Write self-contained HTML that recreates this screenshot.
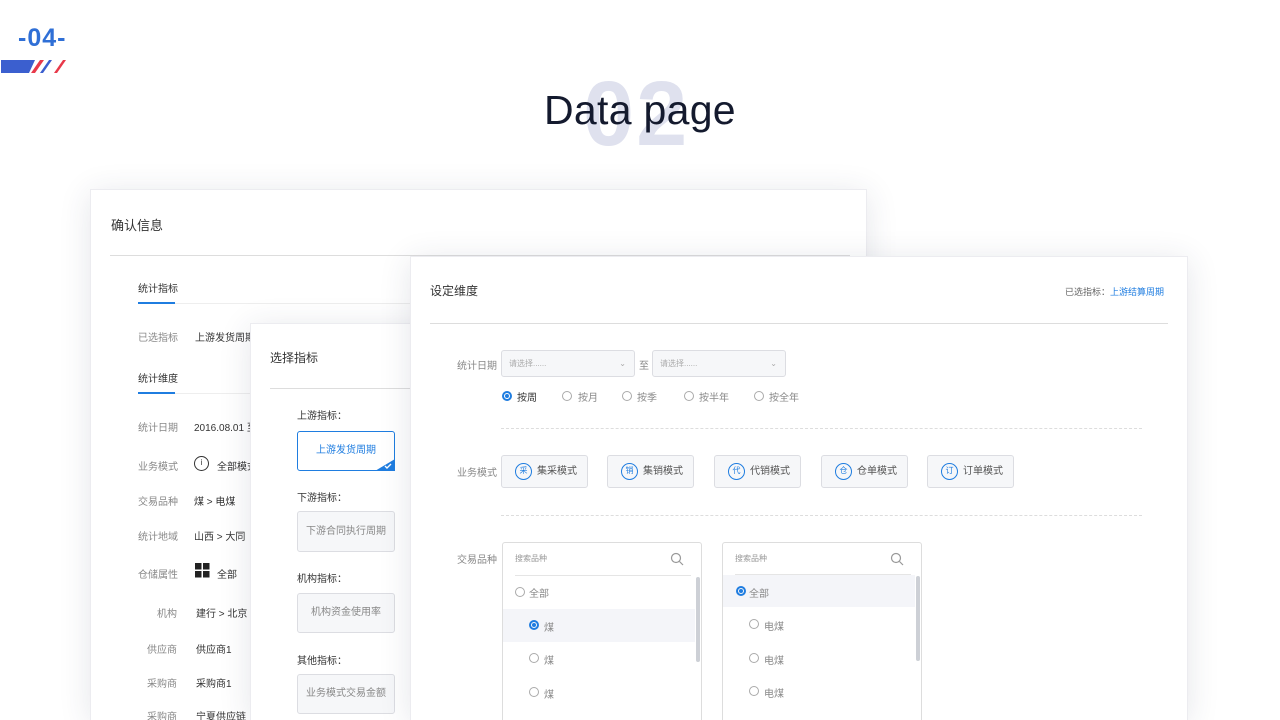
<!DOCTYPE html>
<html style="width:1280px;height:720px;overflow:hidden"><head><meta charset="utf-8"><style>
*{margin:0;padding:0;box-sizing:border-box}
body{width:1280px;height:720px;overflow:hidden;background:#fff;position:relative;font-family:"Liberation Sans","Noto Sans CJK SC",sans-serif;color:#333}
.a{position:absolute;white-space:nowrap}
.card{position:absolute;background:#fff;box-shadow:0 4px 30px rgba(40,50,80,.12);border:1px solid #ececf0;border-bottom:none;overflow:hidden}
.s12{font-size:10px}
.g{color:#888}
.box{position:absolute;border:1px solid #dcdde2;border-radius:3px;background:#f6f7f9;font-size:10px;color:#888;text-align:center;white-space:nowrap}
.rad{position:absolute;width:10px;height:10px;border:1px solid #aaa;border-radius:50%}
.rad.on{border:2px solid #1f7de0}
.rad.on::after{content:"";position:absolute;left:1px;top:1px;width:4px;height:4px;border-radius:50%;background:#1f7de0}
.mb{position:absolute;height:33px;border:1px solid #dcdde2;border-radius:3px;background:#f6f7f9;font-size:10px;color:#555;line-height:31px;padding-left:35px;white-space:nowrap}
.mb i{position:absolute;left:13px;top:7px;width:17px;height:17px;border:1.5px solid #1f7de0;border-radius:50%;font-style:normal;font-size:8px;color:#1f7de0;line-height:14px;text-align:center;padding:0}
</style></head><body>
<div class="a" style="left:18px;top:24px;font-size:25px;font-weight:bold;color:#2f6fd6;letter-spacing:1px">-04-</div>
<svg class="a" style="left:0;top:59px" width="70" height="16"><polygon points="1,1 35,1 29,14 1,14" fill="#3b5fcf" /><polygon points="40,1 44,1 35,14 31,14" fill="#e8394a"/><polygon points="49,1 52,1 43,14 40,14" fill="#3b5fcf"/><polygon points="63,1 66,1 57,14 54,14" fill="#e8394a"/></svg>
<div class="a" style="left:583px;top:62px;font-size:92px;font-weight:bold;color:#dfe1ee;letter-spacing:2px">02</div>
<div class="a" style="left:544px;top:87px;font-size:41px;color:#141a2e;letter-spacing:0.3px">Data page</div>

<div class="card" style="left:90px;top:189px;width:777px;height:531px">
<div class="a" style="left:20px;top:25px;font-size:13px">确认信息</div>
<div class="a" style="left:19px;top:65px;width:740px;height:1px;background:#ddd"></div>
<div class="a s12" style="left:47px;top:90px">统计指标</div>
<div class="a" style="left:47px;top:112px;width:37px;height:2px;background:#1f7de0"></div>
<div class="a" style="left:84px;top:113px;width:680px;height:1px;background:#eee"></div>
<div class="a s12 g" style="left:47px;top:139px">已选指标</div><div class="a s12" style="left:104px;top:139px">上游发货周期</div>
<div class="a s12" style="left:47px;top:180px">统计维度</div>
<div class="a" style="left:47px;top:202px;width:37px;height:2px;background:#1f7de0"></div>
<div class="a" style="left:84px;top:203px;width:680px;height:1px;background:#eee"></div>
<div class="a s12 g" style="left:47px;top:229px">统计日期</div><div class="a s12" style="left:103px;top:229px">2016.08.01 至</div>
<div class="a s12 g" style="left:47px;top:268px">业务模式</div><div class="a" style="left:103px;top:266px;width:15px;height:15px;border:1.5px solid #333;border-radius:50%;font-size:8px;text-align:center;line-height:12px">i</div><div class="a s12" style="left:126px;top:268px">全部模式</div>
<div class="a s12 g" style="left:47px;top:303px">交易品种</div><div class="a s12" style="left:103px;top:303px">煤 &gt; 电煤</div>
<div class="a s12 g" style="left:47px;top:338px">统计地域</div><div class="a s12" style="left:103px;top:338px">山西 &gt; 大同</div>
<svg class="a" style="left:104px;top:373px" width="15" height="15"><rect width="6.5" height="6.5" fill="#222"/><rect x="8" width="6.5" height="6.5" fill="#222"/><rect y="8" width="6.5" height="6.5" fill="#222"/><rect x="8" y="8" width="6.5" height="6.5" fill="#222"/></svg>
<div class="a s12 g" style="left:47px;top:376px">仓储属性</div><div class="a s12" style="left:126px;top:376px">全部</div>
<div class="a s12 g" style="left:66px;top:415px">机构</div><div class="a s12" style="left:105px;top:415px">建行 &gt; 北京</div>
<div class="a s12 g" style="left:56px;top:451px">供应商</div><div class="a s12" style="left:105px;top:451px">供应商1</div>
<div class="a s12 g" style="left:56px;top:485px">采购商</div><div class="a s12" style="left:105px;top:485px">采购商1</div>
<div class="a s12 g" style="left:56px;top:518px">采购商</div><div class="a s12" style="left:105px;top:518px">宁夏供应链</div>
</div>

<div class="card" style="left:250px;top:323px;width:180px;height:397px">
<div class="a" style="left:19px;top:25px;font-size:12px">选择指标</div>
<div class="a" style="left:19px;top:64px;width:160px;height:1px;background:#ddd"></div>
<div class="a s12" style="left:46px;top:83px">上游指标：</div>
<div class="box" style="left:46px;top:107px;width:98px;height:40px;line-height:38px;background:#fff;border-color:#1f7de0;color:#1f7de0">上游发货周期
<svg style="position:absolute;right:-1px;bottom:-1px" width="20" height="12"><polygon points="20,0 20,12 0,12" fill="#1f7de0"/><path d="M10,7 l2,2 l4,-4" stroke="#fff" stroke-width="1.4" fill="none"/></svg></div>
<div class="a s12" style="left:46px;top:165px">下游指标：</div>
<div class="box" style="left:46px;top:187px;width:98px;height:41px;line-height:39px">下游合同执行周期</div>
<div class="a s12" style="left:46px;top:246px">机构指标：</div>
<div class="box" style="left:46px;top:269px;width:98px;height:40px;line-height:38px">机构资金使用率</div>
<div class="a s12" style="left:46px;top:328px">其他指标：</div>
<div class="box" style="left:46px;top:350px;width:98px;height:40px;line-height:38px">业务模式交易金额</div>
</div>

<div class="card" style="left:410px;top:256px;width:778px;height:464px">
<div class="a" style="left:19px;top:25px;font-size:12px">设定维度</div>
<div class="a" style="left:654px;top:28px;font-size:9px;color:#666">已选指标：<span style="color:#1f7de0">上游结算周期</span></div>
<div class="a" style="left:19px;top:66px;width:738px;height:1px;background:#ddd"></div>
<div class="a s12 g" style="left:46px;top:100px">统计日期</div>
<div class="box" style="left:90px;top:93px;width:134px;height:27px;line-height:25px;text-align:left;padding-left:7px;font-size:8px;color:#aaa">请选择......<span style="position:absolute;right:8px">⌄</span></div>
<div class="a s12 g" style="left:228px;top:100px">至</div>
<div class="box" style="left:241px;top:93px;width:134px;height:27px;line-height:25px;text-align:left;padding-left:7px;font-size:8px;color:#aaa">请选择......<span style="position:absolute;right:8px">⌄</span></div>
<div class="rad on" style="left:91px;top:134px"></div><div class="a s12" style="left:106px;top:132px">按周</div>
<div class="rad" style="left:151px;top:134px"></div><div class="a s12 g" style="left:167px;top:132px">按月</div>
<div class="rad" style="left:211px;top:134px"></div><div class="a s12 g" style="left:226px;top:132px">按季</div>
<div class="rad" style="left:273px;top:134px"></div><div class="a s12 g" style="left:288px;top:132px">按半年</div>
<div class="rad" style="left:343px;top:134px"></div><div class="a s12 g" style="left:358px;top:132px">按全年</div>
<div class="a" style="left:90px;top:171px;width:641px;border-top:1px dashed #ddd"></div>
<div class="a s12 g" style="left:46px;top:207px">业务模式</div>
<div class="mb" style="left:90px;top:198px;width:87px">集采模式<i>采</i></div>
<div class="mb" style="left:196px;top:198px;width:87px">集销模式<i>销</i></div>
<div class="mb" style="left:303px;top:198px;width:87px">代销模式<i>代</i></div>
<div class="mb" style="left:410px;top:198px;width:87px">仓单模式<i>仓</i></div>
<div class="mb" style="left:516px;top:198px;width:87px">订单模式<i>订</i></div>
<div class="a" style="left:90px;top:258px;width:641px;border-top:1px dashed #ddd"></div>
<div class="a s12 g" style="left:46px;top:294px">交易品种</div>
<div class="a" style="left:91px;top:285px;width:200px;height:185px;border:1px solid #ddd;border-radius:3px;overflow:hidden">
<div class="a" style="left:12px;top:10px;font-size:8px;color:#999">搜索品种</div>
<svg class="a" style="left:167px;top:9px" width="14" height="14"><circle cx="6" cy="6" r="4.5" stroke="#999" fill="none" stroke-width="1.2"/><path d="M9.5,9.5 L13,13" stroke="#999" stroke-width="1.2"/></svg>
<div class="a" style="left:12px;top:32px;width:176px;height:1px;background:#e5e5e5"></div>
<div class="rad" style="left:12px;top:44px"></div><div class="a s12 g" style="left:26px;top:42px">全部</div>
<div class="a" style="left:0;top:66px;width:192px;height:33px;background:#f4f5f9"></div>
<div class="rad on" style="left:26px;top:77px"></div><div class="a s12 g" style="left:41px;top:76px">煤</div>
<div class="rad" style="left:26px;top:110px"></div><div class="a s12 g" style="left:41px;top:109px">煤</div>
<div class="rad" style="left:26px;top:144px"></div><div class="a s12 g" style="left:41px;top:143px">煤</div>
<div class="rad" style="left:26px;top:177px"></div>
<div class="a" style="left:193px;top:34px;width:4px;height:85px;background:#cdd0d6;border-radius:2px"></div>
</div>
<div class="a" style="left:311px;top:285px;width:200px;height:185px;border:1px solid #ddd;border-radius:3px;overflow:hidden">
<div class="a" style="left:12px;top:10px;font-size:8px;color:#999">搜索品种</div>
<svg class="a" style="left:167px;top:9px" width="14" height="14"><circle cx="6" cy="6" r="4.5" stroke="#999" fill="none" stroke-width="1.2"/><path d="M9.5,9.5 L13,13" stroke="#999" stroke-width="1.2"/></svg>
<div class="a" style="left:12px;top:31px;width:176px;height:1px;background:#e5e5e5"></div>
<div class="a" style="left:0;top:32px;width:192px;height:32px;background:#f4f5f9"></div>
<div class="rad on" style="left:13px;top:43px"></div><div class="a s12 g" style="left:26px;top:42px">全部</div>
<div class="rad" style="left:26px;top:76px"></div><div class="a s12 g" style="left:41px;top:75px">电煤</div>
<div class="rad" style="left:26px;top:110px"></div><div class="a s12 g" style="left:41px;top:109px">电煤</div>
<div class="rad" style="left:26px;top:143px"></div><div class="a s12 g" style="left:41px;top:142px">电煤</div>
<div class="rad" style="left:26px;top:177px"></div>
<div class="a" style="left:193px;top:33px;width:4px;height:85px;background:#cdd0d6;border-radius:2px"></div>
</div>
</div>
</body></html>
